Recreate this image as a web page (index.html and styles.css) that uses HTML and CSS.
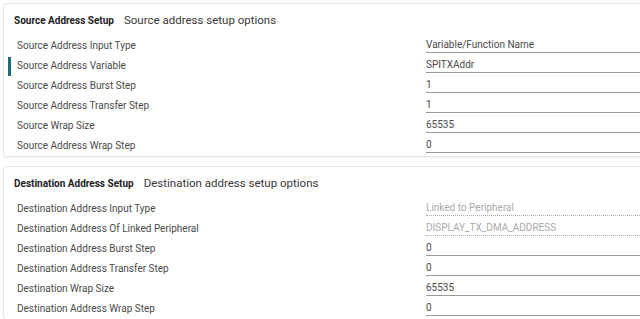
FILE: index.html
```html
<!DOCTYPE html>
<html lang="en">
<head>
    <meta charset="UTF-8">
    <title>Address Setup</title>
    <link rel="stylesheet" href="styles.css">
</head>
<body>

<div class="panel">
    <div class="panel-head">
        <span class="panel-title">Source Address Setup</span>
        <span class="panel-desc">Source address setup options</span>
    </div>
    <div class="row">
        <span class="label">Source Address Input Type</span>
        <span class="value">Variable/Function Name</span>
    </div>
    <div class="row active">
        <span class="label">Source Address Variable</span>
        <span class="value">SPITXAddr</span>
    </div>
    <div class="row">
        <span class="label">Source Address Burst Step</span>
        <span class="value">1</span>
    </div>
    <div class="row">
        <span class="label">Source Address Transfer Step</span>
        <span class="value">1</span>
    </div>
    <div class="row">
        <span class="label">Source Wrap Size</span>
        <span class="value">65535</span>
    </div>
    <div class="row">
        <span class="label">Source Address Wrap Step</span>
        <span class="value">0</span>
    </div>
</div>

<div class="panel">
    <div class="panel-head">
        <span class="panel-title">Destination Address Setup</span>
        <span class="panel-desc">Destination address setup options</span>
    </div>
    <div class="row">
        <span class="label">Destination Address Input Type</span>
        <span class="value disabled">Linked to Peripheral</span>
    </div>
    <div class="row">
        <span class="label">Destination Address Of Linked Peripheral</span>
        <span class="value disabled">DISPLAY_TX_DMA_ADDRESS</span>
    </div>
    <div class="row">
        <span class="label">Destination Address Burst Step</span>
        <span class="value">0</span>
    </div>
    <div class="row">
        <span class="label">Destination Address Transfer Step</span>
        <span class="value">0</span>
    </div>
    <div class="row">
        <span class="label">Destination Wrap Size</span>
        <span class="value">65535</span>
    </div>
    <div class="row">
        <span class="label">Destination Address Wrap Step</span>
        <span class="value">0</span>
    </div>
</div>

</body>
</html>
```

FILE: styles.css
```css
/* Reset and basic styles */
* {
    box-sizing: border-box;
    margin: 0;
    padding: 0;
}

body {
    font-family: Roboto, "Liberation Sans", sans-serif;
    background: #fff;
    color: #4a4a4a;
    padding: 3px 0 0 3px;
    overflow: hidden;
}

.panel {
    width: 660px;
    border: 1px solid #e4e4e4;
    border-radius: 3px;
    box-shadow: 0 1px 2px rgba(0, 0, 0, 0.06);
    margin-bottom: 9px;
}

.panel-head {
    display: flex;
    align-items: center;
    gap: 10px;
    height: 32px;
    padding-left: 10px;
}

.panel-title {
    font-size: 10px;
    font-weight: bold;
    color: #222;
}

.panel-desc {
    font-size: 11.5px;
    color: #383838;
}

.row {
    display: grid;
    grid-template-columns: 422px 1fr;
    height: 20px;
    font-size: 10px;
    position: relative;
}

.row.active::before {
    content: "";
    position: absolute;
    left: 4px;
    top: 1px;
    width: 3px;
    height: 19px;
    background: #1d6b77;
}

.label {
    padding-left: 13px;
    line-height: 20px;
}

.value {
    height: 17px;
    line-height: 18px;
    border-bottom: 1px solid #9a9a9a;
    color: #4a4a4a;
}

.value.disabled {
    color: #aaa;
    border-bottom: 1px dotted #aaa;
}
```
